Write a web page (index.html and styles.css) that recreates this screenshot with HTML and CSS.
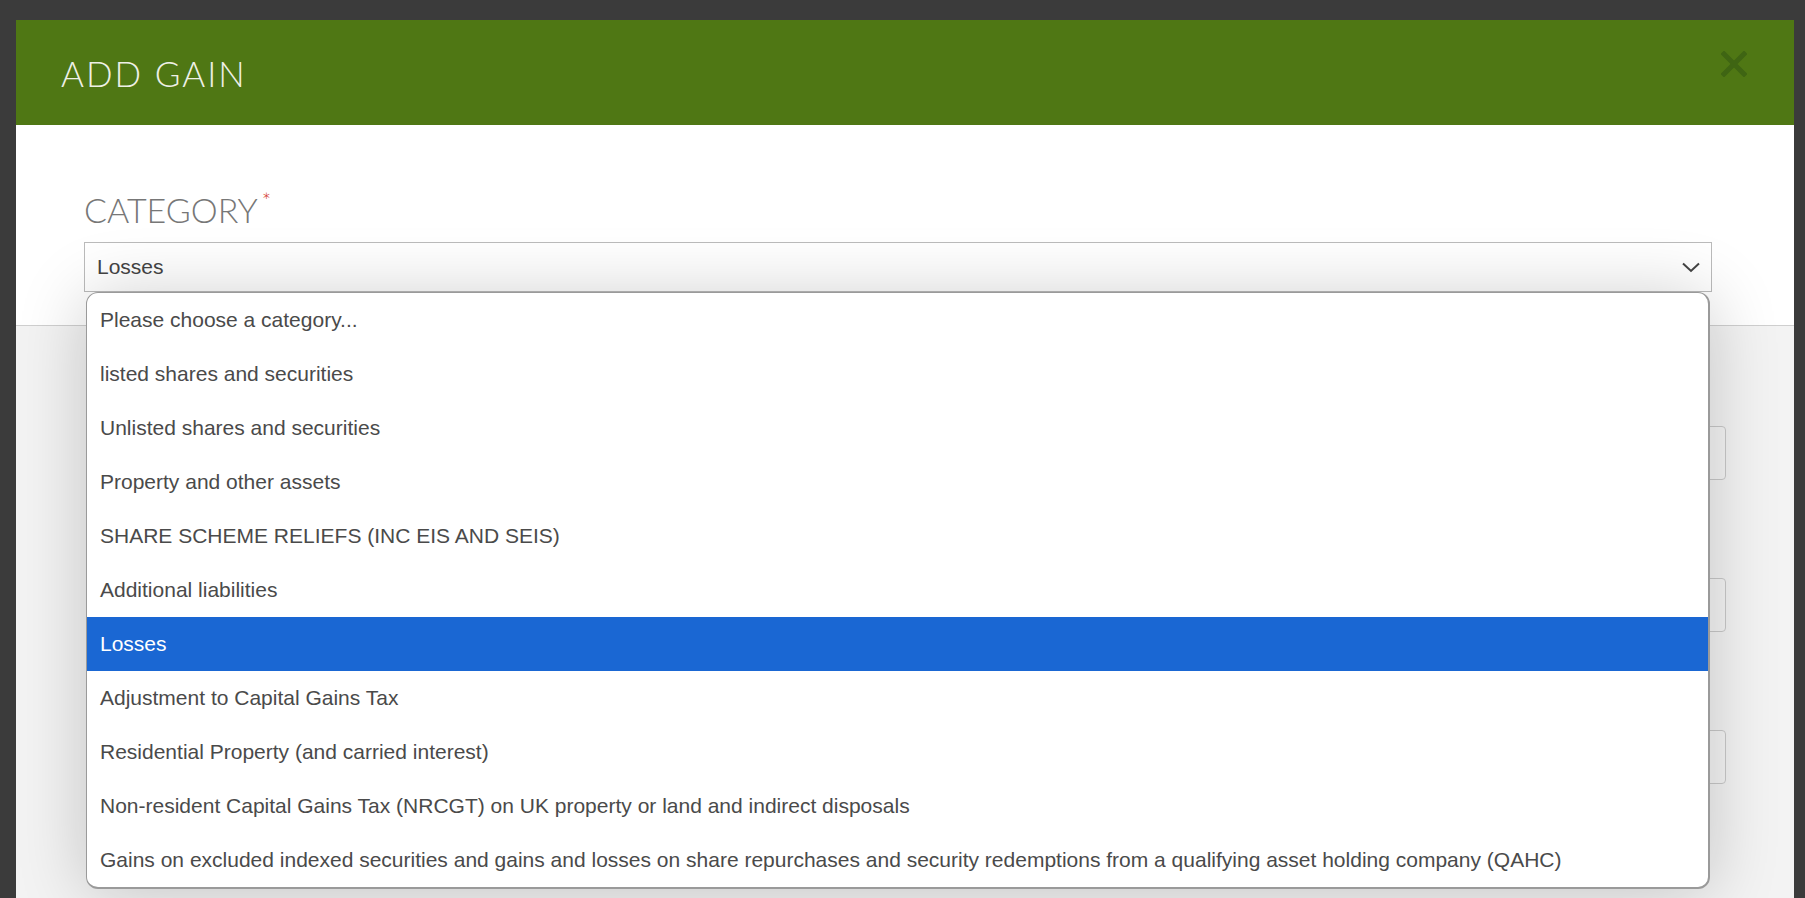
FILE: index.html
```html
<!DOCTYPE html>
<html lang="en">
<head>
<meta charset="UTF-8">
<meta name="viewport" content="width=device-width, initial-scale=1.0">
<title>Add Gain</title>
<link rel="stylesheet" href="styles.css">
</head>
<body>

<div class="modal">
    <div class="modal-head">
        <h2>ADD GAIN</h2>
        <button class="close" aria-label="Close">
            <svg width="26" height="26" viewBox="0 0 26 26"><path d="M3 3 L23 23 M23 3 L3 23" stroke="#3f6513" stroke-width="5" stroke-linecap="square"/></svg>
        </button>
    </div>

    <div class="modal-body">
        <div class="field">
            <label class="field-label">CATEGORY<span class="req">*</span></label>
            <div class="select-box">
                <span>Losses</span>
                <svg width="18" height="11" viewBox="0 0 18 11"><path d="M1 1.5 L9 9 L17 1.5" fill="none" stroke="#444" stroke-width="2"/></svg>
            </div>

            <ul class="dropdown">
                <li>Please choose a category...</li>
                <li>listed shares and securities</li>
                <li>Unlisted shares and securities</li>
                <li>Property and other assets</li>
                <li>SHARE SCHEME RELIEFS (INC EIS AND SEIS)</li>
                <li>Additional liabilities</li>
                <li class="selected">Losses</li>
                <li>Adjustment to Capital Gains Tax</li>
                <li>Residential Property (and carried interest)</li>
                <li>Non-resident Capital Gains Tax (NRCGT) on UK property or land and indirect disposals</li>
                <li>Gains on excluded indexed securities and gains and losses on share repurchases and security redemptions from a qualifying asset holding company (QAHC)</li>
            </ul>
        </div>
    </div>

    <div class="modal-details">
        <div class="row"><input type="text"></div>
        <div class="row"><input type="text"></div>
        <div class="row"><input type="text"></div>
    </div>
</div>

</body>
</html>
```

FILE: styles.css
```css
body {
    margin: 0;
    padding: 20px 11px 0 16px;
    background: #3b3b3b;
    font-family: "Liberation Sans", Arial, sans-serif;
    height: 100vh;
    box-sizing: border-box;
    overflow: hidden;
}
.modal {
    background: #f3f3f3;
    height: 100%;
}
.modal-head {
    background: #4f7714;
    height: 105px;
    display: flex;
    align-items: center;
    justify-content: space-between;
    padding: 0 47px 0 45px;
}
.modal-head h2 {
    margin: 0;
    font-family: Lato, sans-serif;
    font-weight: 300;
    font-size: 35px;
    letter-spacing: 2px;
    color: #eef0e6;
}
.close {
    background: none;
    border: 0;
    padding: 0;
    align-self: flex-start;
    margin-top: 31px;
    display: flex;
}
.modal-body {
    background: #fff;
    height: 200px;
    border-bottom: 1px solid #cfcfcf;
    padding: 0 82px 0 68px;
}
.field {
    position: relative;
    padding-top: 65px;
}
.field-label {
    display: block;
    font-family: Lato, sans-serif;
    font-weight: 300;
    font-size: 34px;
    color: #777;
    line-height: 40px;
    margin-bottom: 12px;
}
.req {
    color: #d33a2c;
    font-size: 22px;
    vertical-align: top;
    margin-left: 4px;
    line-height: 22px;
}
.select-box {
    height: 48px;
    border: 1px solid #bbb;
    background: #fff;
    display: flex;
    align-items: center;
    justify-content: space-between;
    padding: 0 11px 0 12px;
    font-size: 21px;
    color: #444;
}
.dropdown {
    position: absolute;
    left: 2px;
    right: 2px;
    top: 167px;
    margin: 0;
    padding: 0;
    list-style: none;
    background: #fff;
    border: 1px solid #9a9a9a;
    border-width: 1px 2px 2px 1px;
    border-radius: 12px;
    box-shadow: 0 4px 70px rgba(0, 0, 0, 0.2);
    overflow: hidden;
    z-index: 2;
}
.dropdown li {
    height: 54px;
    line-height: 54px;
    padding-left: 13px;
    font-size: 21px;
    color: #4a4a4a;
    white-space: nowrap;
}
.dropdown li.selected {
    background: #1a67d3;
    color: #fff;
}
.modal-details {
    padding: 100px 68px 0 300px;
}
.row {
    display: flex;
    margin-bottom: 98px;
}
.row input {
    flex: 1;
    height: 50px;
    border: 1px solid #c9c9c9;
    border-radius: 4px;
    background: #f5f5f5;
}
```
